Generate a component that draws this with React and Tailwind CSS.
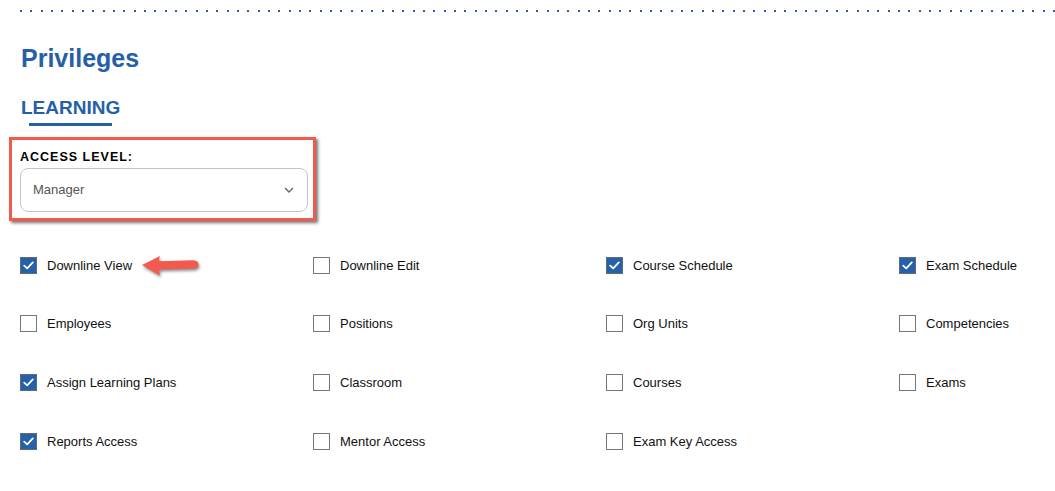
import React from 'react'

const items = [
  ['Downline View', true], ['Downline Edit', false], ['Course Schedule', true], ['Exam Schedule', true],
  ['Employees', false], ['Positions', false], ['Org Units', false], ['Competencies', false],
  ['Assign Learning Plans', true], ['Classroom', false], ['Courses', false], ['Exams', false],
  ['Reports Access', true], ['Mentor Access', false], ['Exam Key Access', false], null,
]

function Box({checked}){
  if(checked){
    return (
      <span className="w-[17px] h-[17px] shrink-0 bg-[#2461a8] border border-[#5f6b78] flex items-center justify-center">
        <svg width="11" height="9" viewBox="0 0 11 9" fill="none">
          <path d="M1.2 4.6 L4.2 7.4 L9.8 1.4" stroke="#fff" strokeWidth="1.8" strokeLinecap="round" strokeLinejoin="round" />
        </svg>
      </span>
    )
  }
  return <span className="w-[17px] h-[17px] shrink-0 bg-white border border-[#767676]" />
}

function Arrow(){
  return (
    <svg width="62" height="24" viewBox="138 253 62 24" className="ml-[8px] mt-[1px]" style={{filter:'drop-shadow(1.5px 2px 1.5px rgba(0,0,0,0.45))'}}>
      <path d="M140 264 L158 255 Q156.5 258 157.5 260.2 L190 259.3 Q196.5 259.3 196.5 263.4 Q196.5 267.8 190 267.8 L157.5 268.4 Q156.5 271 158 274.5 Z" fill="#f25a4e" />
    </svg>
  )
}

export default function App(){
  return (
    <div className="w-[1055px] h-[491px] bg-white overflow-hidden font-['Liberation_Sans',Arial,sans-serif]">
      <div className="pt-[10px] pl-[20px]">
        <div className="h-[2px] w-[1035px] bg-[repeating-linear-gradient(to_right,#2a5fa3_0_2px,transparent_2px_10.33px)]" />
      </div>

      <h1 className="pl-[21px] mt-[31px] text-[25px] leading-[30px] font-bold text-[#2560a6]">Privileges</h1>

      <div className="pl-[21px] mt-[24px]">
        <div className="text-[19px] leading-[22px] font-bold text-[#2560a6]">LEARNING</div>
        <div className="ml-[8px] mt-[4px] w-[83px] h-[3px] bg-[#2560a6]" />
      </div>

      <div className="ml-[9px] mt-[11px] w-[307px] h-[84px] border-[3px] border-[#f25a4e] shadow-[2px_2px_3px_rgba(0,0,0,0.55)] px-[8px] pt-[10px]">
        <div className="text-[12.5px] leading-[14px] font-bold tracking-[1px] text-black">ACCESS LEVEL:</div>
        <div className="mt-[4px] h-[44px] w-[288px] border border-[#c4c4c4] rounded-[8px] flex items-center justify-between pl-[12px] pr-[13px]">
          <span className="text-[13px] text-[#555]">Manager</span>
          <svg width="10" height="6" viewBox="0 0 10 6" fill="none">
            <path d="M1 1 L5 5 L9 1" stroke="#666" strokeWidth="1.4" />
          </svg>
        </div>
      </div>

      <div className="pl-[20px] mt-[15px] grid grid-cols-[293px_293px_293px_156px]">
        {items.map((it, i) => (
          <div key={i} className="h-[58.67px] flex items-center">
            {it && (
              <>
                <Box checked={it[1]} />
                <span className="ml-[10px] text-[13px] text-[#111]">{it[0]}</span>
                {i === 0 && <Arrow />}
              </>
            )}
          </div>
        ))}
      </div>
    </div>
  )
}
